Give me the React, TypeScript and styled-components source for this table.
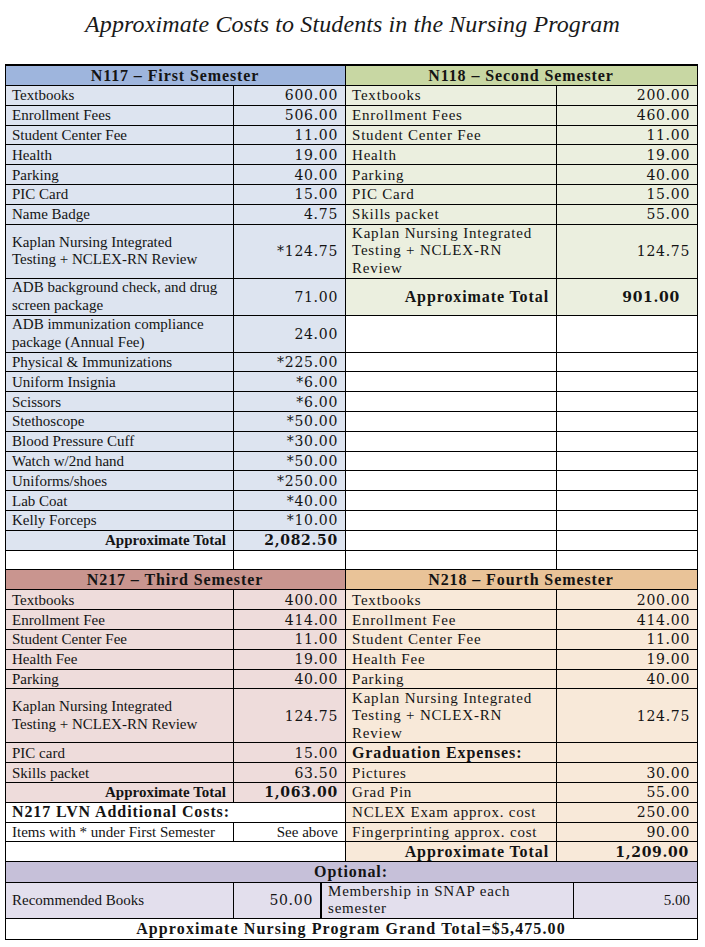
import React from "react";
import styled, { createGlobalStyle } from "styled-components";

const GlobalStyle = createGlobalStyle`
  html, body { margin: 0; padding: 0; background: #fff; }
  body { font-family: "Liberation Serif", "Times New Roman", serif; color: #141414; }
`;

type Face = "times" | "georgia" | "num";
type Align = "left" | "right" | "center";

const tones = {
  blueHead: "#9eb5dd",
  blue: "#dde4f0",
  greenHead: "#c8d7a3",
  green: "#ebefdf",
  roseHead: "#c9958f",
  rose: "#eedcdb",
  peachHead: "#e9c398",
  peach: "#f8e9d9",
  lavHead: "#c6c0d9",
  lav: "#e3dfed",
  white: "#ffffff",
};

const Page = styled.div`
  width: 705px;
  padding-top: 10px;
`;

const Title = styled.h1`
  margin: 0 0 26px 0;
  height: 28px;
  text-align: center;
  font-family: "Liberation Serif", serif;
  font-style: italic;
  font-weight: normal;
  font-size: 24px;
  line-height: 28px;
  letter-spacing: 0.1px;
  color: #1a1a1a;
`;

const Table = styled.div`
  margin-left: 5px;
  width: 693px;
  box-sizing: border-box;
  background: #000;
  padding: 2px 1px 1px 1px;
  display: flex;
  flex-direction: column;
  gap: 1px;
`;

const Grid = styled.div<{ $cols: string }>`
  display: grid;
  grid-template-columns: ${(p) => p.$cols};
  gap: 1px;
  background: #000;
`;

const faceCss = (f: Face) =>
  f === "num"
    ? `font-family: "DejaVu Serif", serif; font-size: 14px; letter-spacing: 0.7px;`
    : f === "georgia"
    ? `font-family: "Liberation Serif", serif; font-size: 15px; letter-spacing: 0.8px;`
    : `font-family: "Liberation Serif", serif; font-size: 15px; letter-spacing: 0;`;

const Cell = styled.div<{
  $bg: string;
  $align?: Align;
  $span?: number;
  $face?: Face;
  $bold?: boolean;
  $big?: boolean;
  $padR?: number;
  $thickLeft?: boolean;
  $minH?: number;
}>`
  grid-column: span ${(p) => p.$span ?? 1};
  background: ${(p) => p.$bg};
  display: flex;
  align-items: center;
  justify-content: ${(p) =>
    p.$align === "right" ? "flex-end" : p.$align === "center" ? "center" : "flex-start"};
  text-align: ${(p) => p.$align ?? "left"};
  min-height: ${(p) => p.$minH ?? 18.8}px;
  padding: 0 ${(p) => p.$padR ?? 7}px 0 6px;
  line-height: 18px;
  white-space: nowrap;
  overflow: hidden;
  ${(p) => faceCss(p.$face ?? "times")}
  font-weight: ${(p) => (p.$bold ? "bold" : "normal")};
  ${(p) => (p.$big ? "font-size: 16px; letter-spacing: 0.9px;" : "")}
  ${(p) => (p.$thickLeft ? "border-left: 1px solid #000; padding-left: 6px;" : "")}
`;

const Lines = styled.span`
  display: block;
  line-height: 17.5px;
`;

const GrandTotal = styled(Cell)`
  letter-spacing: 1.1px;
`;

type Entry =
  | { t: "header"; label: string }
  | { t: "item"; label: React.ReactNode; value: string; h?: number }
  | { t: "total"; value: string; h?: number }
  | { t: "blank"; h?: number }
  | { t: "wideBlank" }
  | { t: "note"; label: string }
  | { t: "subhead"; label: string }
  | { t: "plain"; label: string; value: string };

type Half = {
  head: string;
  body: string;
  labelFace: Face;
  wideTotal: boolean;
  totalPad: number;
  rows: Entry[];
};

const multi = (...parts: string[]) => (
  <Lines>
    {parts.map((p, i) => (
      <React.Fragment key={i}>
        {i > 0 && <br />}
        {p}
      </React.Fragment>
    ))}
  </Lines>
);
const kaplan2 = multi("Kaplan Nursing Integrated", "Testing + NCLEX-RN Review");
const kaplan3 = multi("Kaplan Nursing Integrated", "Testing + NCLEX-RN", "Review");

const blanks = (heights: (number | undefined)[]): Entry[] =>
  heights.map((h) => ({ t: "blank" as const, h }));

const n117: Half = {
  head: tones.blueHead,
  body: tones.blue,
  labelFace: "times",
  wideTotal: false,
  totalPad: 7,
  rows: [
    { t: "header", label: "N117 – First Semester" },
    { t: "item", label: "Textbooks", value: "600.00" },
    { t: "item", label: "Enrollment Fees", value: "506.00" },
    { t: "item", label: "Student Center Fee", value: "11.00" },
    { t: "item", label: "Health", value: "19.00" },
    { t: "item", label: "Parking", value: "40.00" },
    { t: "item", label: "PIC Card", value: "15.00" },
    { t: "item", label: "Name Badge", value: "4.75" },
    { t: "item", label: kaplan2, value: "*124.75", h: 53 },
    { t: "item", label: multi("ADB background check, and drug", "screen package"), value: "71.00", h: 36 },
    { t: "item", label: multi("ADB immunization compliance", "package (Annual Fee)"), value: "24.00", h: 36 },
    { t: "item", label: "Physical & Immunizations", value: "*225.00" },
    { t: "item", label: "Uniform Insignia", value: "*6.00" },
    { t: "item", label: "Scissors", value: "*6.00" },
    { t: "item", label: "Stethoscope", value: "*50.00" },
    { t: "item", label: "Blood Pressure Cuff", value: "*30.00" },
    { t: "item", label: "Watch w/2nd hand", value: "*50.00" },
    { t: "item", label: "Uniforms/shoes", value: "*250.00" },
    { t: "item", label: "Lab Coat", value: "*40.00" },
    { t: "item", label: "Kelly Forceps", value: "*10.00" },
    { t: "total", value: "2,082.50" },
    { t: "blank" },
  ],
};

const n118: Half = {
  head: tones.greenHead,
  body: tones.green,
  labelFace: "georgia",
  wideTotal: true,
  totalPad: 17,
  rows: [
    { t: "header", label: "N118 – Second Semester" },
    { t: "item", label: "Textbooks", value: "200.00" },
    { t: "item", label: "Enrollment Fees", value: "460.00" },
    { t: "item", label: "Student Center Fee", value: "11.00" },
    { t: "item", label: "Health", value: "19.00" },
    { t: "item", label: "Parking", value: "40.00" },
    { t: "item", label: "PIC Card", value: "15.00" },
    { t: "item", label: "Skills packet", value: "55.00" },
    { t: "item", label: kaplan3, value: "124.75", h: 53 },
    { t: "total", value: "901.00", h: 36 },
    ...blanks([36, undefined, undefined, undefined, undefined, undefined, undefined, undefined, undefined, undefined, undefined, undefined]),
  ],
};

const n217: Half = {
  head: tones.roseHead,
  body: tones.rose,
  labelFace: "times",
  wideTotal: false,
  totalPad: 7,
  rows: [
    { t: "header", label: "N217 – Third Semester" },
    { t: "item", label: "Textbooks", value: "400.00" },
    { t: "item", label: "Enrollment Fee", value: "414.00" },
    { t: "item", label: "Student Center Fee", value: "11.00" },
    { t: "item", label: "Health Fee", value: "19.00" },
    { t: "item", label: "Parking", value: "40.00" },
    { t: "item", label: kaplan2, value: "124.75", h: 53 },
    { t: "item", label: "PIC card", value: "15.00" },
    { t: "item", label: "Skills packet", value: "63.50" },
    { t: "total", value: "1,063.00" },
    { t: "note", label: "N217 LVN Additional Costs:" },
    { t: "plain", label: "Items with * under First Semester", value: "See above" },
    { t: "wideBlank" },
  ],
};

const n218: Half = {
  head: tones.peachHead,
  body: tones.peach,
  labelFace: "georgia",
  wideTotal: true,
  totalPad: 8,
  rows: [
    { t: "header", label: "N218 – Fourth Semester" },
    { t: "item", label: "Textbooks", value: "200.00" },
    { t: "item", label: "Enrollment Fee", value: "414.00" },
    { t: "item", label: "Student Center Fee", value: "11.00" },
    { t: "item", label: "Health Fee", value: "19.00" },
    { t: "item", label: "Parking", value: "40.00" },
    { t: "item", label: kaplan3, value: "124.75", h: 53 },
    { t: "subhead", label: "Graduation Expenses:" },
    { t: "item", label: "Pictures", value: "30.00" },
    { t: "item", label: "Grad Pin", value: "55.00" },
    { t: "item", label: "NCLEX Exam approx. cost", value: "250.00" },
    { t: "item", label: "Fingerprinting approx. cost", value: "90.00" },
    { t: "total", value: "1,209.00" },
  ],
};

function renderEntry(e: Entry, h: Half, key: string): React.ReactNode[] {
  switch (e.t) {
    case "header":
      return [
        <Cell key={key} $bg={h.head} $span={2} $align="center" $bold $big $minH={19}>
          {e.label}
        </Cell>,
      ];
    case "item":
      return [
        <Cell key={key + "l"} $bg={h.body} $face={h.labelFace} $minH={e.h}>
          {e.label}
        </Cell>,
        <Cell key={key + "v"} $bg={h.body} $align="right" $face="num" $minH={e.h}>
          {e.value}
        </Cell>,
      ];
    case "total":
      return [
        <Cell key={key + "l"} $bg={h.body} $align="right" $bold $big={h.wideTotal} $minH={e.h}>
          Approximate Total
        </Cell>,
        <Cell
          key={key + "v"}
          $bg={h.body}
          $align="right"
          $bold
          $face="num"
          $padR={h.totalPad}
          $minH={e.h}
        >
          {e.value}
        </Cell>,
      ];
    case "blank":
      return [
        <Cell key={key + "l"} $bg={tones.white} $minH={e.h} />,
        <Cell key={key + "v"} $bg={tones.white} $minH={e.h} />,
      ];
    case "wideBlank":
      return [<Cell key={key} $bg={tones.white} $span={2} />];
    case "note":
      return [
        <Cell key={key} $bg={tones.white} $span={2} $bold $big>
          {e.label}
        </Cell>,
      ];
    case "subhead":
      return [
        <Cell key={key + "l"} $bg={h.body} $bold $big>
          {e.label}
        </Cell>,
        <Cell key={key + "v"} $bg={h.body} />,
      ];
    case "plain":
      return [
        <Cell key={key + "l"} $bg={tones.white}>
          {e.label}
        </Cell>,
        <Cell key={key + "v"} $bg={tones.white} $align="right">
          {e.value}
        </Cell>,
      ];
  }
}

function Section({ left, right, id }: { left: Half; right: Half; id: string }) {
  return (
    <>
      {left.rows.map((row, i) => [
        ...renderEntry(row, left, `${id}-l-${i}`),
        ...renderEntry(right.rows[i], right, `${id}-r-${i}`),
      ])}
    </>
  );
}

export default function App() {
  return (
    <Page>
      <GlobalStyle />
      <Title>Approximate Costs to Students in the Nursing Program</Title>
      <Table>
        <Grid $cols="227px 111px 210px 140px">
          <Section left={n117} right={n118} id="top" />
          <Section left={n217} right={n218} id="bottom" />
        </Grid>
        <Grid $cols="227px 86px 252px 123px">
          <Cell $bg={tones.lavHead} $span={4} $align="center" $bold $big $minH={19.5}>
            Optional:
          </Cell>
          <Cell $bg={tones.lav} $minH={35.5}>
            Recommended Books
          </Cell>
          <Cell $bg={tones.lav} $align="right" $face="num" $minH={35.5}>
            50.00
          </Cell>
          <Cell $bg={tones.lav} $face="georgia" $thickLeft $minH={35.5}>
            {multi("Membership in SNAP each", "semester")}
          </Cell>
          <Cell $bg={tones.lav} $align="right" $minH={35.5}>
            5.00
          </Cell>
          <GrandTotal $bg={tones.white} $span={4} $align="center" $bold $big $minH={19.5}>
            Approximate Nursing Program Grand Total=$5,475.00
          </GrandTotal>
        </Grid>
      </Table>
    </Page>
  );
}
